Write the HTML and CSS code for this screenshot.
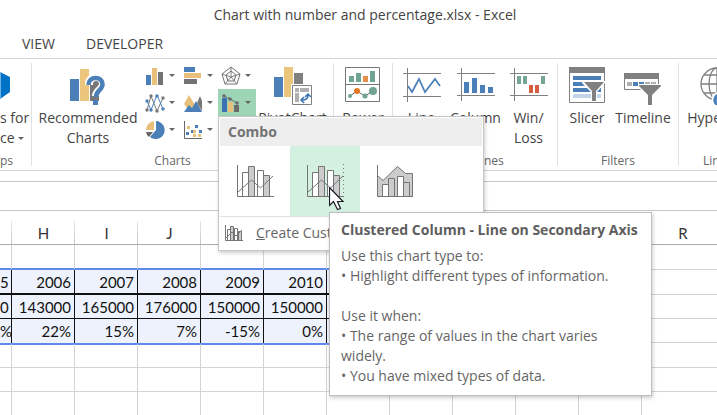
FILE: index.html
```html
<!DOCTYPE html>
<html lang="en">
<head>
<meta charset="utf-8">
<title>Chart with number and percentage.xlsx - Excel</title>
<link rel="stylesheet" href="styles.css">
</head>
<body>
<header class="titlebar">Chart with number and percentage.xlsx - Excel</header>
<nav class="tabs"><a href="#view">VIEW</a><a href="#developer">DEVELOPER</a></nav>

<div class="ribbon">
  <section class="group apps">
    <button class="tool">
      <svg width="36" height="38" viewBox="0 0 36 38"><path d="M0 5 10 10V25L0 32z" fill="#0072c6"/><path d="M0 5 1 5.500V31L0 32z" fill="#6db3e8"/></svg>
      <span>s for</span><span>ce <i class="caret"></i></span>
    </button>
    <h2>ps</h2>
  </section>

  <section class="group charts">
    <div class="tools">
      <button class="tool recommended">
        <svg width="36" height="38" viewBox="0 0 36 38"><path d="M0 12h9v22H0z" fill="#4a7fb8"/><path d="M10 2h9v32h-9z" fill="#ecc57d"/><path d="M20 8h9v26h-9z" fill="#777"/><path d="M19 18v-1c0-4 3-7 7-7s7 3 7 7c0 6-7 6-7 12" fill="none" stroke="#fff" stroke-width="8"/><path d="M18.500 18c0-4.500 3-7 7-7s7 2.500 7 6.500c0 5.500-6.500 6-6.500 12.500" fill="none" stroke="#4a7fb8" stroke-width="4.500"/><path d="M23 33h5v5h-5z" fill="#4a7fb8"/></svg>
        <span>Recommended</span><span>Charts</span>
      </button>
      <div class="gallery">
        <button class="mini" aria-label="Column chart"><svg width="20" height="20" viewBox="0 0 20 20"><path d="M1 9h5v10H1z" fill="#4a7fb8"/><path d="M7 2h5v17H7z" fill="#e8c07c"/><path d="M13 6h5v13h-5z" fill="#737373"/></svg><i class="caret"></i></button>
        <button class="mini" aria-label="Bar chart"><svg width="20" height="20" viewBox="0 0 20 20"><path d="M1 1h11v5H1z" fill="#4a7fb8"/><path d="M1 7h17v5H1z" fill="#e8c07c"/><path d="M1 13h13v5H1z" fill="#737373"/></svg><i class="caret"></i></button>
        <button class="mini" aria-label="Radar chart"><svg width="20" height="20" viewBox="0 0 20 20" fill="none" stroke="#737373"><path d="m10 1 9 7-3 10H4L1 8zM10 5l5 4-2 6H7L5 9z"/><path d="M10 1v10l9-3M10 11l6 7M10 11l-6 7M10 11 1 8" stroke-width=".9"/></svg><i class="caret"></i></button>
        <button class="mini" aria-label="Line chart"><svg width="20" height="20" viewBox="0 0 20 20"><path d="m2 17 4-14 6 15 6-13" fill="none" stroke="#777"/><path d="m2 8 4 9 6-15 6 14" fill="none" stroke="#4a7fb8"/><g fill="#4a7fb8"><circle cx="2" cy="8" r="1.700"/><circle cx="6" cy="17" r="1.700"/><circle cx="12" cy="3" r="1.700"/><circle cx="18" cy="16" r="1.700"/></g><g fill="#777"><circle cx="2" cy="17" r="1.700"/><circle cx="6" cy="3" r="1.700"/><circle cx="12" cy="18" r="1.700"/><circle cx="18" cy="5" r="1.700"/></g></svg><i class="caret"></i></button>
        <button class="mini" aria-label="Area chart"><svg width="20" height="20" viewBox="0 0 20 20"><path d="m14 10 3-7 2 5v10z" fill="#777"/><path d="m1 11 5-9 6 10-6 6z" fill="#e8c07c"/><path d="m1 19 5-7 3 3 4-7 6 11z" fill="#4a7fb8"/></svg><i class="caret"></i></button>
        <div class="anchor">
          <button class="mini active" aria-label="Combo chart"><svg width="20" height="20" viewBox="0 0 20 20"><path d="M1 5h5v14H1z" fill="#3c72b0"/><path d="M7 9h5v10H7z" fill="#e8c07c"/><path d="M13 12h5v7h-5z" fill="#6b6b6b"/><path d="m3 3 6 3 7 4" fill="none" stroke="#6b6b6b"/><g fill="#6b6b6b"><circle cx="3" cy="3" r="1.800"/><circle cx="9" cy="6" r="1.800"/><circle cx="16" cy="10" r="1.800"/></g></svg><i class="caret"></i></button>
          <div class="menu">
            <h3>Combo</h3>
            <div class="choices">
              <button class="choice" aria-label="Clustered Column - Line"><svg width="38" height="34" viewBox="0 0 38 34"><g fill="#fff" stroke="#757575"><path d="M6.500 8.500h6v24h-6zM21.500 6.500h6v26h-6z"/><path d="M12.500 2.500h6v30h-6zM27.500 11.500h6v21h-6z" fill="#ccc"/><path d="M1.500 1v31.500H38M2 28 15.500 16l9 8L37 12" fill="none"/></g></svg></button>
              <div class="anchor">
                <button class="choice chosen" aria-label="Clustered Column - Line on Secondary Axis"><svg width="38" height="34" viewBox="0 0 38 34"><g fill="#fff" stroke="#757575"><path d="M6.500 8.500h6v24h-6zM21.500 6.500h6v26h-6z"/><path d="M12.500 2.500h6v30h-6zM27.500 11.500h6v21h-6z" fill="#ccc"/><path d="M1.500 1v31.500H38M2 28 15.500 16l9 8L37 12" fill="none"/><path d="M38 0v33" stroke-width="2" stroke-dasharray="1 3"/></g></svg></button>
                <svg class="pointer" width="16" height="25" viewBox="0 0 16 25"><path d="M.5.500v18l4-4 4 8 3-1-3-7h5.500z" fill="#fff" stroke="#1b1b25" stroke-width="1.200"/></svg>
                <div class="tooltip" role="tooltip">
                  <h4>Clustered Column - Line on Secondary Axis</h4>
                  <p>Use this chart type to:<br>• Highlight different types of information.</p>
                  <p>Use it when:<br>• The range of values in the chart varies<br>widely.<br>• You have mixed types of data.</p>
                </div>
              </div>
              <button class="choice" aria-label="Stacked Area - Clustered Column"><svg width="38" height="34" viewBox="0 0 38 34"><path d="M1.500 11.500 7 16.500 21.500 2.500l8 7h7v23h-35z" fill="#ccc" stroke="#757575"/><g fill="#fff" stroke="#757575"><path d="M6.500 20.500h6v12h-6zM21.500 12.500h6v20h-6z"/><path d="M12.500 14.500h6v18h-6zM27.500 18.500h6v14h-6z" fill="#ccc"/><path d="M1.500 1v31.500H37" fill="none"/></g></svg></button>
            </div>
            <button class="custom"><svg width="20" height="18" viewBox="0 0 20 18"><g fill="#fff" stroke="#757575"><path d="M3.500 5.500h3v11h-3zM10.500 4.500h3v12h-3z"/><path d="M6.500 2.500h3v14h-3zM14.500 7.500h3v9h-3z" fill="#ccc"/><path d="M1.500 1v15.500H19M2 14l6-6 4 4 6-6" fill="none"/></g></svg><span><u>C</u>reate Cust</span></button>
          </div>
        </div>
        <button class="mini" aria-label="Pie chart"><svg width="20" height="20" viewBox="0 0 20 20"><path d="M11 1a9 9 0 1 1-6 16l6-7z" fill="#4a7fb8"/><path d="M9 1v9H1a9 9 0 0 1 8-9z" fill="#e8c07c"/><path d="M1 12h7l-4 5a8 8 0 0 1-3-5z" fill="#666"/></svg><i class="caret"></i></button>
        <button class="mini" aria-label="Scatter chart"><svg width="20" height="20" viewBox="0 0 20 20"><path d="M1.500 1v17.500H19" fill="none" stroke="#666"/><path d="M3 12h3v3H3zM8 10h3v3H8zM12 5h3v3h-3zM16 10h3v3h-3z" fill="#4a7fb8"/><path d="M4 6h3v3H4zM10 14h3v3h-3zM15 14h3v3h-3zM10 10h3v3h-3z" fill="#e8c07c"/></svg><i class="caret"></i></button>
      </div>
      <button class="tool pivot"><svg width="38" height="38" viewBox="0 0 38 38"><path d="M0 10h9v20H0z" fill="#4a7fb8"/><path d="M10 0h9v30h-9z" fill="#ecc57d"/><path d="M20 6h9v12h-9z" fill="#808080"/><path d="M17 17h21v21H17z" fill="#fff"/><path d="M18.500 18.500h19v19h-19z" fill="#fff" stroke="#808080"/><path d="M21 21h4v4h-4zM26 21h9v4h-9zM21 26h4v9h-4z" fill="#b0b0b0"/><path d="M28 33c4 0 6-2 6-5M30 30l-3 3 3 3M31 30l3-3 3 3" fill="none" stroke="#3c72b0" stroke-width="1.500"/></svg><span>PivotChart</span></button>
    </div>
    <h2>Charts</h2>
  </section>

  <section class="group power">
    <button class="tool"><svg width="36" height="38" viewBox="0 0 36 38"><path d="M.5.500h34v34H.500zM1 17.500h33" fill="#fff" stroke="#777"/><g fill="#6fa590"><path d="M4 9h5v6H4zM11 6h5v9h-5zM25 4h5v11h-5z"/></g><path d="M18 9h5v6h-5z" fill="#e58e49"/><path d="m5 29 7-5 8 5 8-5" fill="none" stroke="#666"/><g fill="#6fa590"><circle cx="5" cy="29" r="2"/><circle cx="20" cy="29" r="2.500"/><circle cx="28" cy="24" r="4"/></g><circle cx="12" cy="24" r="3" fill="#e47824"/></svg><span>Power</span></button>
  </section>

  <section class="group sparklines">
    <div class="tools">
      <button class="tool line"><svg width="38" height="38" viewBox="0 0 38 38"><path d="M0 6.500h38M0 29.500h38M4.500 1v34" stroke="#808080"/><path d="m5 19 4 6 7-13 6 13 10-13 5 7" fill="none" stroke="#4a7fb8" stroke-width="1.700"/></svg><span>Line</span></button>
      <button class="tool column"><svg width="38" height="38" viewBox="0 0 38 38"><path d="M0 6.500h38M0 28.500h38M4.500 1v33" stroke="#808080"/><path d="M7 15h5v11H7zM15 11h5v15h-5zM23 18h5v8h-5zM31 20h5v6h-5z" fill="#4a7fb8"/></svg><span>Column</span></button>
      <button class="tool winloss"><svg width="38" height="38" viewBox="0 0 38 38"><path d="M0 6.500h38M0 28.500h38M4.500 1v33" stroke="#808080"/><path d="M7 9h4v8H7zM13 9h4v8h-4zM31 9h4v8h-4z" fill="#76a592"/><path d="M19 18h4v8h-4zM25 18h4v8h-4z" fill="#d75d40"/></svg><span>Win/</span><span>Loss</span></button>
    </div>
    <h2>Sparklines</h2>
  </section>

  <section class="group filters">
    <div class="tools">
      <button class="tool slicer"><svg width="36" height="38" viewBox="0 0 36 38"><path d="M.5.500h35v35H.500z" fill="#fff" stroke="#808080"/><path d="M0 0h36v6H0z" fill="#808080"/><path d="M4 9h28v4H4zM4 15h28v4H4zM4 21h28v4H4z" fill="#4a7fb8"/><path d="M4 27h28v4H4z" fill="#c3d5e8"/><path d="M13 14h23v2l-8 9v10h-6V25l-9-9z" fill="#fff"/><path d="M15 15h20l-8 9v10h-4V24z" fill="#808080"/></svg><span>Slicer</span></button>
      <button class="tool timeline"><svg width="38" height="38" viewBox="0 0 38 38"><path d="M.5 6.500h34v16H.500z" fill="#fff" stroke="#808080"/><path d="M0 6h35v6H0z" fill="#808080"/><path d="M3 15h5v4H3zM21 15h5v4h-5zM27 15h5v4h-5z" fill="#b0b0b0"/><path d="M9 15h5v4H9zM15 15h5v4h-5z" fill="#4a7fb8"/><path d="M14 17h24v3l-9 9v9h-6v-9l-9-9z" fill="#fff"/><path d="M15 18h22v1l-9 9v10h-4V28l-9-9z" fill="#808080"/></svg><span>Timeline</span></button>
    </div>
    <h2>Filters</h2>
  </section>

  <section class="group links">
    <button class="tool"><svg width="38" height="38" viewBox="0 0 38 38"><g fill="none" stroke="#808080" stroke-width="1.300"><circle cx="17" cy="17" r="16"/><ellipse cx="17" cy="17" rx="8" ry="16"/><path d="M17 1v32M1 17h32M4 8h26M4 26h26"/></g><circle cx="20" cy="33" r="5" fill="none" stroke="#fff" stroke-width="7"/><circle cx="20" cy="33" r="5" fill="none" stroke="#4a7fb8" stroke-width="3.500"/></svg><span>Hyperlink</span></button>
    <h2>Links</h2>
  </section>
</div>

<div class="gap"></div>
<div class="formula"></div>

<main class="sheet">
  <table>
    <colgroup><col class="edge"><col span="10" class="std"><col class="wide"></colgroup>
    <thead><tr><th></th><th>H</th><th>I</th><th>J</th><th></th><th></th><th></th><th></th><th></th><th></th><th></th><th>R</th></tr></thead>
    <tbody>
      <tr class="above"><td class="s"></td><td class="s"></td><td class="s"></td><td class="s"></td><td class="s"></td><td class="s"></td><td class="s"></td><td></td><td></td><td></td><td></td><td></td></tr>
      <tr class="years tall"><td class="s">5</td><td class="s">2006</td><td class="s">2007</td><td class="s">2008</td><td class="s">2009</td><td class="s">2010</td><td class="s"></td><td></td><td></td><td></td><td></td><td></td></tr>
      <tr class="values"><td class="s">0</td><td class="s">143000</td><td class="s">165000</td><td class="s">176000</td><td class="s">150000</td><td class="s">150000</td><td class="s"></td><td></td><td></td><td></td><td></td><td></td></tr>
      <tr class="shares"><td class="s">%</td><td class="s">22%</td><td class="s">15%</td><td class="s">7%</td><td class="s">-15%</td><td class="s">0%</td><td class="s"></td><td></td><td></td><td></td><td></td><td></td></tr>
      <tr class="below tall"><td class="s"></td><td class="s"></td><td class="s"></td><td class="s"></td><td class="s"></td><td class="s"></td><td class="s"></td><td></td><td></td><td></td><td></td><td></td></tr>
      <tr><td></td><td></td><td></td><td></td><td></td><td></td><td></td><td></td><td></td><td></td><td></td><td></td></tr>
      <tr><td></td><td></td><td></td><td></td><td></td><td></td><td></td><td></td><td></td><td></td><td></td><td></td></tr>
    </tbody>
  </table>
</main>
</body>
</html>
```

FILE: styles.css
```css
* { box-sizing: border-box; }
html { overflow: hidden; }
body {
  margin: 0;
  overflow: hidden;
  background: #fff;
  color: #444;
  font: 14px/20px "Open Sans", "Noto Sans", sans-serif;
}
h2, h3, h4, p { margin: 0; }
button {
  border: 0;
  padding: 0;
  background: none;
  color: inherit;
  font: inherit;
}
svg { display: block; flex: none; }

.titlebar { height: 32px; padding: 5px 0 0 13px; text-align: center; }
.tabs { display: flex; gap: 31px; height: 26px; padding: 2px 22px 0; }
.tabs a { color: inherit; text-decoration: none; }

.ribbon {
  display: flex;
  height: 113px;
  border-top: 1px solid #d4d4d4;
  border-bottom: 1px solid #d4d4d4;
}
.group {
  display: flex;
  flex: none;
  flex-direction: column;
  justify-content: space-between;
  margin: 4px 0;
  border-right: 1px solid #e1e1e1;
}
.group h2 {
  height: 15px;
  color: #666;
  font-size: 12px;
  font-weight: 400;
  line-height: 20px;
  text-align: center;
}
.tools { display: flex; }
.tool {
  display: flex;
  flex: none;
  flex-direction: column;
  align-items: center;
  padding-top: 4px;
  white-space: nowrap;
}
.tool svg { margin-bottom: 3px; }
.caret {
  display: inline-block;
  border: 3px solid transparent;
  border-top-color: #666;
  border-bottom: 0;
  vertical-align: 3px;
}

.apps { width: 32px; }
.apps .tool { align-items: flex-start; }
.apps h2 { text-align: left; }
.charts { width: 302px; }
.charts h2 { padding-right: 20px; }
.recommended { width: 110px; padding-left: 2px; }
.gallery { display: grid; grid-template-columns: repeat(3, 38px); grid-auto-rows: 27px; margin-top: -1px; }
.mini {
  display: flex;
  align-items: center;
  gap: 4px;
  width: 38px;
  height: 27px;
  padding-left: 3px;
}
.active { background: #9fd5b7; }
.pivot { width: 73px; }
.anchor { position: relative; }
.power { width: 59px; }
.sparklines { width: 165px; }
.line { width: 57px; }
.column { width: 51px; }
.winloss { width: 55px; }
.filters { width: 121px; }
.slicer { width: 58px; }
.timeline { width: 54px; }
.links { flex: 1; min-width: 0; overflow: hidden; border: 0; padding-left: 7px; }
.links .tool { width: 65px; }
.links h2 { padding-left: 17px; text-align: left; }

.menu {
  position: absolute;
  z-index: 2;
  top: 27px;
  left: 0;
  width: 266px;
  padding: 1px;
  border: 1px solid #c6c6c6;
  background: #fff;
  color: #666;
  box-shadow: 1px 2px 4px #0003;
}
.menu h3 { padding: 4px 8px; background: #eee; color: #737373; font-size: 14px; }
.choices { display: flex; border-bottom: 1px solid #e1e1e1; }
.choice {
  display: flex;
  align-items: center;
  justify-content: center;
  width: 70px;
  height: 70px;
}
.chosen { background: #d3f0e0; }
.custom { display: flex; align-items: center; gap: 12px; width: 100%; height: 32px; padding-left: 4px; }
.pointer { position: absolute; z-index: 4; top: 41px; left: 39px; }
.tooltip {
  position: absolute;
  z-index: 3;
  top: 66px;
  left: 39px;
  width: 323px;
  padding: 7px 11px 9px;
  border: 1px solid #bebebe;
  background: #fff;
  color: #666;
  box-shadow: 1px 2px 4px #0003;
  white-space: nowrap;
}
.tooltip h4 { margin-bottom: 6px; color: #5e5e5e; font-size: 14px; }
.tooltip p + p { margin-top: 20px; }

.gap { height: 11px; border-bottom: 1px solid #c6c6c6; }
.formula { height: 29px; border-bottom: 1px solid #c6c6c6; }

.sheet { overflow: hidden; }
table {
  width: 724px;
  border-spacing: 0;
  color: #111;
  font: 15px/20px Lato, "Liberation Sans", sans-serif;
  table-layout: fixed;
}
.edge { width: 12px; }
.std { width: 63px; }
.wide { width: 82px; }
th {
  height: 34px;
  padding: 10px 0 0;
  border-bottom: 1px solid #ababab;
  background: linear-gradient(#e8e8e8, #c6c6c6) right bottom / 1px 23px no-repeat;
  color: #333;
  font-weight: 400;
}
td {
  height: 24px;
  padding: 0 3px 0 0;
  border-right: 1px solid #d4d4d4;
  border-bottom: 1px solid #d4d4d4;
  text-align: right;
}
.above td, .tall td { height: 25px; }
.above .s { border-bottom: 2px solid #5f89ea; }
.years .s, .values .s, .shares .s { border-color: #111; background: #edf2fc; }
.years .s { border-bottom-width: 2px; }
.shares .s { border-bottom: 0; }
.below .s { border-top: 2px solid #5f89ea; }
```
